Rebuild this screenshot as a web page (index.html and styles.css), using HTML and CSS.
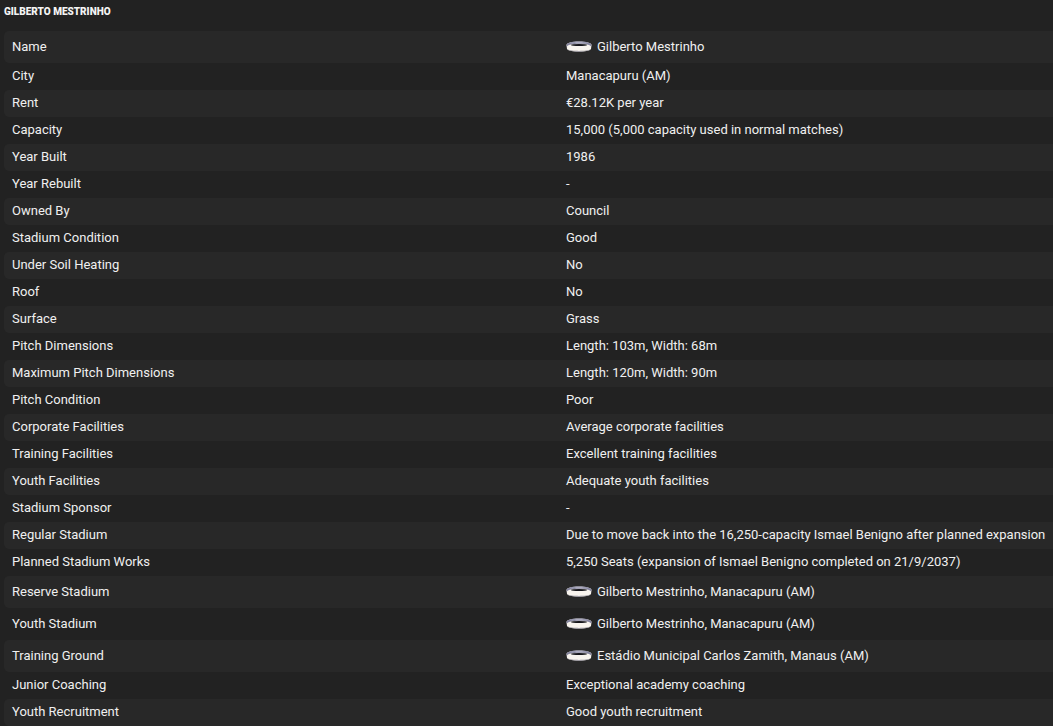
FILE: index.html
```html
<!DOCTYPE html>
<html lang="en">
<head>
<meta charset="utf-8">
<title>Gilberto Mestrinho</title>
<link rel="stylesheet" href="styles.css">
</head>
<body>
<svg class="defs" width="0" height="0" aria-hidden="true">
  <symbol id="stadium" viewBox="0 0 26 11">
    <path d="M0.5 4C0.5 1.8 6 0.4 13 0.4S25.5 1.8 25.5 4L25 8C23.5 9.8 18.5 10.7 13 10.7S2.5 9.8 1 8Z" fill="#f8f4ee"/>
    <path d="M0.5 4C0.5 1.8 6 0.4 13 0.4S25.5 1.8 25.5 4L25.3 5.5C24 4.2 22 3.4 21 3.4C18 2.6 8 2.6 5 3.4C4 3.4 2 4.2 0.7 5.5Z" fill="#85859e"/>
    <path d="M5 2.2C8 1.4 18 1.4 21 2.2C18 1.9 8 1.9 5 2.2Z" fill="#d4d2e2"/>
    <ellipse cx="13" cy="4" rx="8" ry="1.1" fill="#15151a"/>
    <path d="M1 8C3 9.4 8 9.9 13 9.9S23 9.4 25 8C23.5 9.8 18.5 10.7 13 10.7S2.5 9.8 1 8Z" fill="#8e8c96"/>
  </symbol>
</svg>
<main class="panel">
  <h1 class="title">GILBERTO MESTRINHO</h1>
  <div class="table">
    <div class="row tall"><span class="label">Name</span><span class="value"><svg class="icon"><use href="#stadium"/></svg>Gilberto Mestrinho</span></div>
    <div class="row"><span class="label">City</span><span class="value">Manacapuru (AM)</span></div>
    <div class="row"><span class="label">Rent</span><span class="value">€28.12K per year</span></div>
    <div class="row"><span class="label">Capacity</span><span class="value">15,000 (5,000 capacity used in normal matches)</span></div>
    <div class="row"><span class="label">Year Built</span><span class="value">1986</span></div>
    <div class="row"><span class="label">Year Rebuilt</span><span class="value">-</span></div>
    <div class="row"><span class="label">Owned By</span><span class="value">Council</span></div>
    <div class="row"><span class="label">Stadium Condition</span><span class="value">Good</span></div>
    <div class="row"><span class="label">Under Soil Heating</span><span class="value">No</span></div>
    <div class="row"><span class="label">Roof</span><span class="value">No</span></div>
    <div class="row"><span class="label">Surface</span><span class="value">Grass</span></div>
    <div class="row"><span class="label">Pitch Dimensions</span><span class="value">Length: 103m, Width: 68m</span></div>
    <div class="row"><span class="label">Maximum Pitch Dimensions</span><span class="value">Length: 120m, Width: 90m</span></div>
    <div class="row"><span class="label">Pitch Condition</span><span class="value">Poor</span></div>
    <div class="row"><span class="label">Corporate Facilities</span><span class="value">Average corporate facilities</span></div>
    <div class="row"><span class="label">Training Facilities</span><span class="value">Excellent training facilities</span></div>
    <div class="row"><span class="label">Youth Facilities</span><span class="value">Adequate youth facilities</span></div>
    <div class="row"><span class="label">Stadium Sponsor</span><span class="value">-</span></div>
    <div class="row"><span class="label">Regular Stadium</span><span class="value">Due to move back into the 16,250-capacity Ismael Benigno after planned expansion</span></div>
    <div class="row"><span class="label">Planned Stadium Works</span><span class="value">5,250 Seats (expansion of Ismael Benigno completed on 21/9/2037)</span></div>
    <div class="row tall"><span class="label">Reserve Stadium</span><span class="value"><svg class="icon"><use href="#stadium"/></svg>Gilberto Mestrinho, Manacapuru (AM)</span></div>
    <div class="row tall"><span class="label">Youth Stadium</span><span class="value"><svg class="icon"><use href="#stadium"/></svg>Gilberto Mestrinho, Manacapuru (AM)</span></div>
    <div class="row tall"><span class="label">Training Ground</span><span class="value"><svg class="icon"><use href="#stadium"/></svg>Estádio Municipal Carlos Zamith, Manaus (AM)</span></div>
    <div class="row"><span class="label">Junior Coaching</span><span class="value">Exceptional academy coaching</span></div>
    <div class="row"><span class="label">Youth Recruitment</span><span class="value">Good youth recruitment</span></div>
  </div>
</main>
</body>
</html>
```
FILE: styles.css
```css
html, body {
  margin: 0;
  padding: 0;
  height: 100%;
  background: #222222;
  overflow: hidden;
}
.defs { position: absolute; }
.panel {
  font-family: "Roboto", "Liberation Sans", sans-serif;
  color: #f0f0f0;
  font-size: 13px;
  display: flex;
  flex-direction: column;
}
.title {
  margin: 0;
  padding: 6px 0 0 4px;
  height: 31px;
  box-sizing: border-box;
  font-size: 10px;
  line-height: 11px;
  font-weight: 900;
  color: #f4f4f4;
}
.table { display: flex; flex-direction: column; padding-left: 4px; }
.row {
  display: grid;
  grid-template-columns: 554px 1fr;
  align-items: center;
  box-sizing: border-box;
  height: 27px;
  padding: 0 0 2px 8px;
  border-radius: 5px 0 0 5px;
  white-space: nowrap;
}
.row.tall { height: 32px; }
.row:nth-child(odd) { background: #282828; }
.value { display: flex; align-items: center; }
.icon { width: 26px; height: 11px; margin: 1px 5px 0 0; flex: none; }
```
